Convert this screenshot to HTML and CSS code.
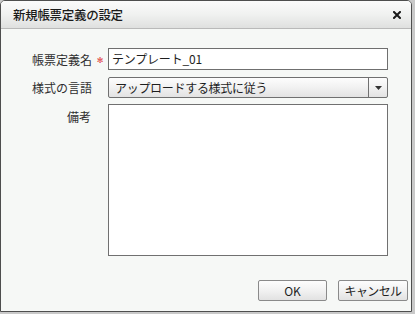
FILE: index.html
```html
<!DOCTYPE html>
<html lang="ja">
<head>
<meta charset="utf-8">
<link rel="stylesheet" href="styles.css">
</head>
<body>
<div class="dialog">
  <div class="titlebar">
    <span class="title">新規帳票定義の設定</span>
    <span class="close">
      <svg width="8" height="8" viewBox="0 0 8 8"><path d="M1 1 L7 7 M7 1 L1 7" stroke="#1a1a1a" stroke-width="2" stroke-linecap="square"/></svg>
    </span>
  </div>
  <div class="body">
    <div class="form">
      <div class="label">帳票定義名</div>
      <div class="req">✻</div>
      <div class="input">テンプレート_01</div>

      <div class="label">様式の言語</div>
      <div class="req"></div>
      <div class="select">
        <span class="select-text">アップロードする様式に従う</span>
        <span class="select-btn"><svg width="7" height="4" viewBox="0 0 7 4"><path d="M0 0 H7 L3.5 4 Z" fill="#333"/></svg></span>
      </div>

      <div class="label label-top">備考</div>
      <div class="req"></div>
      <div class="textarea"></div>
    </div>
    <div class="buttons">
      <div class="btn btn-ok">OK</div>
      <div class="btn btn-cancel">キャンセル</div>
    </div>
  </div>
</div>
</body>
</html>
```
FILE: styles.css
```css
html, body {
  margin: 0;
  padding: 0;
}
body {
  width: 415px;
  height: 314px;
  background: #c9c9c9;
  font-family: "Noto Sans CJK JP", "Noto Sans", sans-serif;
  font-size: 12px;
  color: #2a2a2a;
  overflow: hidden;
}
.dialog {
  width: 410px;
  height: 310px;
  border: 1px solid #4e4e4e;
  border-radius: 5px 5px 0 0;
  background: #f6f8f6;
  display: flex;
  flex-direction: column;
  overflow: hidden;
}
.titlebar {
  height: 27px;
  flex: none;
  display: flex;
  align-items: center;
  justify-content: space-between;
  padding: 0 10px 0 12px;
  background: linear-gradient(to bottom, #fbfbfb 0%, #f0f1f0 50%, #dfe0df 100%);
  border-bottom: 1px solid #b9b9b9;
}
.title {
  font-size: 12.5px;
  color: #1a1a1a;
  font-weight: 500;
  letter-spacing: -0.3px;
}
.close {
  display: flex;
  align-items: center;
  margin-top: 1px;
}
.body {
  flex: 1;
  display: flex;
  flex-direction: column;
  padding: 19px 3px 10px 0;
}
.form {
  display: grid;
  grid-template-columns: 91px 16px 280px;
  grid-template-rows: 22px 21px 152px;
  row-gap: 7px;
  align-items: center;
}
.form > .textarea, .form > .label-top { align-self: start; }
.label {
  text-align: right;
  white-space: nowrap;
  color: #2e2e2e;
}
.label-top {
  padding-top: 3px;
  padding-right: 1px;
}
.req {
  color: #e03a3a;
  text-align: center;
  font-family: "DejaVu Sans", sans-serif;
  font-size: 8px;
  line-height: 10px;
  padding-top: 3px;
}
.input {
  box-sizing: border-box;
  height: 22px;
  border: 1px solid #6f6f6f;
  background: #fff;
  padding: 0 3px;
  line-height: 20px;
  color: #1e1e1e;
  letter-spacing: -0.2px;
}
.select {
  height: 21px;
  box-sizing: border-box;
  border: 1px solid #707070;
  border-radius: 2px;
  background: linear-gradient(to bottom, #fdfdfd 0%, #f1f1f1 50%, #e3e3e3 100%);
  display: flex;
  align-items: stretch;
}
.select-text {
  flex: 1;
  padding-left: 6px;
  line-height: 19px;
  color: #1e1e1e;
  letter-spacing: -0.3px;
}
.select-btn {
  width: 18px;
  border-left: 1px solid #707070;
  display: flex;
  align-items: center;
  justify-content: center;
}
.textarea {
  margin-top: -1px;
  height: 152px;
  box-sizing: border-box;
  border: 1px solid #707070;
  background: #fff;
}
.buttons {
  margin-top: auto;
  display: flex;
  justify-content: flex-end;
  gap: 11px;
}
.btn {
  height: 21px;
  box-sizing: border-box;
  border: 1px solid #8a8a8a;
  border-radius: 2px;
  background: linear-gradient(to bottom, #fdfdfd 0%, #f0f0f0 55%, #e2e2e2 100%);
  display: flex;
  align-items: center;
  justify-content: center;
  color: #1e1e1e;
}
.btn-ok { width: 69px; }
.btn-cancel { width: 70px; letter-spacing: -0.6px; }
```
